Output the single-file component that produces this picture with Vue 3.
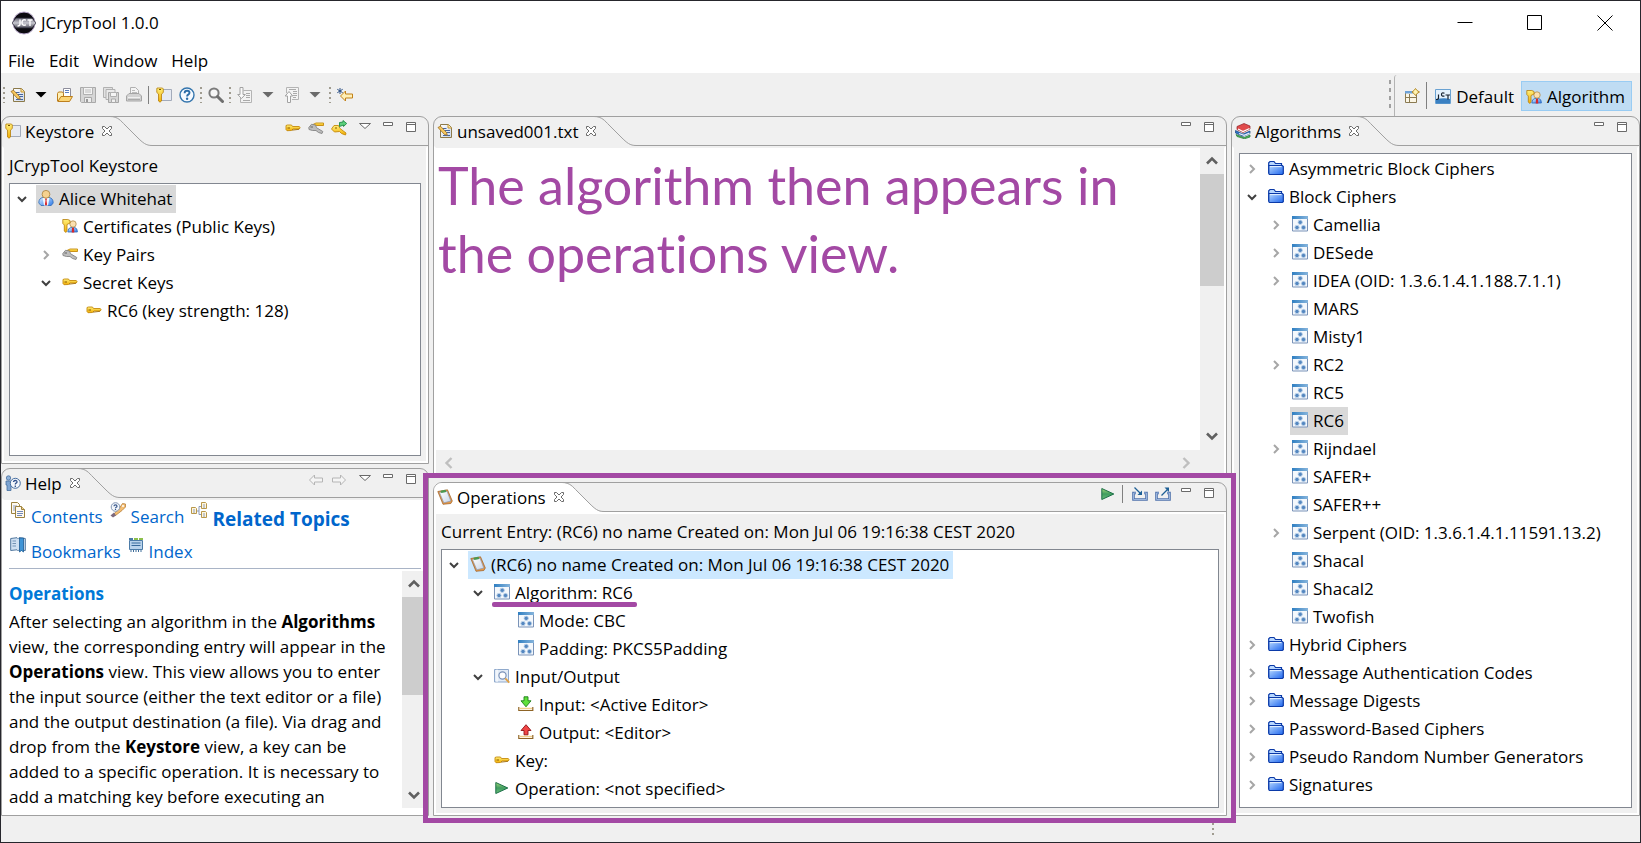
<script setup>
import { ref } from 'vue'

const editorText = ref('The algorithm then appears in\nthe operations view.')

const menus = ['File', 'Edit', 'Window', 'Help']

const tools = [
  { kind: 'grip' },
  { kind: 'icon', icon: 'new', label: 'New' },
  { kind: 'drop', icon: 'drop-black', label: 'New options' },
  { kind: 'icon', icon: 'open', label: 'Open' },
  { kind: 'icon', icon: 'save', label: 'Save' },
  { kind: 'icon', icon: 'saveall', label: 'Save all' },
  { kind: 'icon', icon: 'print', label: 'Print' },
  { kind: 'sep' },
  { kind: 'icon', icon: 'keystore', label: 'Keystore' },
  { kind: 'icon', icon: 'help', label: 'Help' },
  { kind: 'grip' },
  { kind: 'icon', icon: 'search', label: 'Search' },
  { kind: 'grip' },
  { kind: 'icon', icon: 'next', label: 'Next annotation' },
  { kind: 'drop', icon: 'drop-grey', label: 'Next annotation options' },
  { kind: 'icon', icon: 'prev', label: 'Previous annotation' },
  { kind: 'drop', icon: 'drop-grey', label: 'Previous annotation options' },
  { kind: 'grip' },
  { kind: 'icon', icon: 'lastedit', label: 'Last edit location' },
]

const keystoreTree = [
  { level: 0, state: 'open', icon: 'person', text: 'Alice Whitehat', mark: 'grey' },
  { level: 1, icon: 'cert', text: 'Certificates (Public Keys)' },
  { level: 1, state: 'closed', icon: 'keypair', text: 'Key Pairs' },
  { level: 1, state: 'open', icon: 'key', text: 'Secret Keys' },
  { level: 2, icon: 'key', text: 'RC6 (key strength: 128)' },
]

const operationsTree = [
  { level: 0, state: 'open', icon: 'clipboard', text: '(RC6) no name Created on: Mon Jul 06 19:16:38 CEST 2020', mark: 'blue' },
  { level: 1, state: 'open', icon: 'algo', text: 'Algorithm: RC6', mark: 'underlined' },
  { level: 2, icon: 'algo', text: 'Mode: CBC' },
  { level: 2, icon: 'algo', text: 'Padding: PKCS5Padding' },
  { level: 1, state: 'open', icon: 'io', text: 'Input/Output' },
  { level: 2, icon: 'input', text: 'Input: <Active Editor>' },
  { level: 2, icon: 'output', text: 'Output: <Editor>' },
  { level: 1, icon: 'key', text: 'Key:' },
  { level: 1, icon: 'run', text: 'Operation: <not specified>' },
]

const folder = (text, state = 'closed') => ({ level: 0, state, icon: 'folder', text })
const cipher = (text, state, mark) => ({ level: 1, state, icon: 'algo', text, mark })

const algorithmsTree = [
  folder('Asymmetric Block Ciphers'),
  folder('Block Ciphers', 'open'),
  cipher('Camellia', 'closed'),
  cipher('DESede', 'closed'),
  cipher('IDEA (OID: 1.3.6.1.4.1.188.7.1.1)', 'closed'),
  cipher('MARS'),
  cipher('Misty1'),
  cipher('RC2', 'closed'),
  cipher('RC5'),
  cipher('RC6', undefined, 'grey'),
  cipher('Rijndael', 'closed'),
  cipher('SAFER+'),
  cipher('SAFER++'),
  cipher('Serpent (OID: 1.3.6.1.4.1.11591.13.2)', 'closed'),
  cipher('Shacal'),
  cipher('Shacal2'),
  cipher('Twofish'),
  folder('Hybrid Ciphers'),
  folder('Message Authentication Codes'),
  folder('Message Digests'),
  folder('Password-Based Ciphers'),
  folder('Pseudo Random Number Generators'),
  folder('Signatures'),
]

const views = {
  keystore: {
    title: 'Keystore', icon: 'keystore',
    actions: [['key', 'New key'], ['keypair', 'New key pair'], ['keyadd', 'Import key'], ['menu', 'View menu'], ['min', 'Minimize'], ['max', 'Maximize']],
  },
  help: {
    title: 'Help', icon: 'helpview',
    actions: [['back', 'Back'], ['forward', 'Forward'], ['menu', 'View menu'], ['min', 'Minimize'], ['max', 'Maximize']],
  },
  editor: { title: 'unsaved001.txt', icon: 'new', actions: [['min', 'Minimize'], ['max', 'Maximize']] },
  operations: {
    title: 'Operations', icon: 'clipboard',
    actions: [['run', 'Run'], ['sep', ''], ['import', 'Import'], ['export', 'Export'], ['min', 'Minimize'], ['max', 'Maximize']],
  },
  algorithms: { title: 'Algorithms', icon: 'books', actions: [['min', 'Minimize'], ['max', 'Maximize']] },
}

const columns = [
  { name: 'left', views: ['keystore', 'help'] },
  { name: 'centre', views: ['editor', 'operations'] },
  { name: 'right', views: ['algorithms'] },
]
const trees = { keystore: keystoreTree, operations: operationsTree, algorithms: algorithmsTree }
const captions = {
  keystore: 'JCrypTool Keystore',
  operations: 'Current Entry: (RC6) no name Created on: Mon Jul 06 19:16:38 CEST 2020',
}
</script>

<template>
  <div class="window">
    <svg class="defs" aria-hidden="true">
      <defs>
        <linearGradient id="gGold" x1="0" y1="0" x2="0" y2="1"><stop offset="0" stop-color="#fff07a" /><stop offset="1" stop-color="#f2ac00" /></linearGradient>
        <linearGradient id="gBlue" x1="0" y1="0" x2="1" y2="1"><stop offset="0" stop-color="#d5ebff" /><stop offset="1" stop-color="#2f7bea" /></linearGradient>
        <linearGradient id="gFolder" x1="0" y1="0" x2="1" y2="1"><stop offset="0" stop-color="#b8daff" /><stop offset="1" stop-color="#1f66ee" /></linearGradient>
        <linearGradient id="gBar" x1="0" y1="0" x2="1" y2="0"><stop offset="0" stop-color="#2f7fc2" /><stop offset="1" stop-color="#86b4dc" /></linearGradient>
        <linearGradient id="gPage" x1="0" y1="0" x2="1" y2="1"><stop offset="0" stop-color="#ffffff" /><stop offset="1" stop-color="#c9d6ea" /></linearGradient>
        <linearGradient id="gRun" x1="0" y1="0" x2="0" y2="1"><stop offset="0" stop-color="#a4d878" /><stop offset="0.5" stop-color="#3f9c60" /><stop offset="1" stop-color="#6cc07a" /></linearGradient>
        <linearGradient id="gChrome" x1="0" y1="0" x2="0" y2="1"><stop offset="0" stop-color="#6a6a78" /><stop offset="0.5" stop-color="#c8c8d0" /><stop offset="1" stop-color="#4b4b58" /></linearGradient>
      </defs>
      <symbol id="logo" viewBox="0 0 24 24">
        <circle cx="12" cy="12" r="11" fill="#0c0b10" stroke="#b9a9cc" />
        <path d="M0 12 4 7h16l4 5-4 5H4Z" fill="url(#gChrome)" stroke="#2a2a35" stroke-width=".7" />
        <path d="M8 8.500v4.500q0 2-2.500 2M14 9.200q-4-1.400-4 2.300t4 2.300M15.500 9h5M18 9v6" stroke="#fff" stroke-width="1.400" fill="none" />
      </symbol>
      <symbol id="new" viewBox="0 0 16 16">
        <path d="M3.500 1.500h8l3 3v10h-11Z" fill="url(#gPage)" stroke="#8c7a4a" />
        <path d="M11 1.500v3.500h3.500" fill="#ffe9a8" stroke="#c9962f" />
        <path d="M5.500 5.500h4M8 7.500h5M9 9.500h4M6 12.500h7" stroke="#47679f" />
        <path d="M1 4.500 3.500 3.200 9.500 9.500l.8 2.700L7.500 11.500Z" fill="#f5c860" stroke="#9a6b1c" stroke-width=".8" />
      </symbol>
      <symbol id="open" viewBox="0 0 16 16">
        <path d="M6.500 1.500h7v8h-7Z" fill="#fff" stroke="#8e8e9c" />
        <path d="M8 3.500h4M8 5.500h4" stroke="#5d7fc0" />
        <path d="M.5 14V6.500l1-1.500h4l1 1.500v3h5" fill="#fff0b5" stroke="#bd7f1d" />
        <path d="M.8 14.500 4 9.500h11.500l-3 5Z" fill="#fbd575" stroke="#bd7f1d" />
      </symbol>
      <symbol id="save" viewBox="0 0 16 16">
        <path d="M.5.5h15v15h-14l-1-1Z" fill="#d6d6d6" stroke="#a9a9a9" />
        <path d="M3.500.5h9v7h-9Z" fill="#f4f4f4" stroke="#b0b0b0" /><path d="M5 3h6M5 5h6" stroke="#bcbcbc" />
        <path d="M4.500 10.500h7v5h-7Z" fill="#eee" stroke="#a9a9a9" /><path d="M6 12h2v3H6Z" fill="#999" />
      </symbol>
      <symbol id="saveall" viewBox="0 0 16 16">
        <path d="M.5.5h9v10h-9Z" fill="#e2e2e2" stroke="#b1b1b1" />
        <path d="M3 2.500h9v10H3Z" fill="#eaeaea" stroke="#b1b1b1" />
        <path d="M5.500 5.500h10v10h-10Z" fill="#d6d6d6" stroke="#a5a5a5" />
        <path d="M7.500 5.500h6v4h-6Z" fill="#f5f5f5" stroke="#b0b0b0" /><path d="M8.500 12h4v3.500h-4Z" fill="#f0f0f0" stroke="#aaa" />
      </symbol>
      <symbol id="print" viewBox="0 0 16 16">
        <path d="M4.500.5h5l3 3v5h-8Z" fill="#f4f4f4" stroke="#b0b0b0" /><path d="M6 3.500h3M6 5.500h5" stroke="#bbb" />
        <path d="M.5 9 3 6.500h10L15.500 9v5h-15Z" fill="#d2d2d2" stroke="#a5a5a5" /><path d="M2 10.500h12" stroke="#efefef" /><path d="M2 12.500h12" stroke="#aaa" />
      </symbol>
      <symbol id="keystore" viewBox="0 0 16 16">
        <path d="M4.500 2.500h11v11h-11Z" fill="#e6eaf2" stroke="#a3abba" />
        <path d="M1 1h5.500l.8 1v3.500L5.500 7v7L4 15.200 2.500 14V7L.8 5.500V2Z" fill="url(#gGold)" stroke="#b57d0a" stroke-width=".8" />
        <path d="M3 2.500h2" stroke="#7c5400" />
      </symbol>
      <symbol id="help" viewBox="0 0 16 16">
        <circle cx="8" cy="8" r="7" fill="#f6faff" stroke="#3475ad" stroke-width="1.400" />
        <path d="M5.600 6.200q0-2.400 2.500-2.400 2.400 0 2.400 2 0 1.200-1.300 1.900-1.100.6-1.100 1.700" fill="none" stroke="#2d6da8" stroke-width="1.900" /><circle cx="8.100" cy="11.700" r="1.200" fill="#2d6da8" />
      </symbol>
      <symbol id="search" viewBox="0 0 16 16">
        <circle cx="6" cy="6" r="4.600" fill="#f6f6f6" stroke="#7c7c7c" stroke-width="2" />
        <path d="m9.500 9.500 5 5" stroke="#6f6f6f" stroke-width="3" stroke-linecap="round" />
      </symbol>
      <symbol id="next" viewBox="0 0 16 16">
        <path d="M6.500 3.500h8v12h-11V11" fill="#f3f3f3" stroke="#b4b4b4" /><path d="M9 6.500h4M9 8.500h4M9 10.500h4M6 13.500h7" stroke="#aaa" />
        <path d="M3 .5h3v7h2.300L4.500 11.500.7 7.500H3Z" fill="#fafafa" stroke="#a2a2a2" />
      </symbol>
      <symbol id="prev" viewBox="0 0 16 16">
        <path d="M2.500 6V.5h12v12H8" fill="#f3f3f3" stroke="#b4b4b4" /><path d="M5 2.500h7M9 4.500h4M9 6.500h4M9 8.500h4M9 10.500h3" stroke="#aaa" />
        <path d="M3.500 15.500h3V9h2.200L5 4.500 1.200 9h2.300Z" fill="#fafafa" stroke="#a2a2a2" />
      </symbol>
      <symbol id="lastedit" viewBox="0 0 16 16">
        <path d="M3 1v6M.3 2.300l5.400 3.400M5.700 2.300.3 5.700" stroke="#2b4f84" />
        <path d="M3.500 9 8.500 4v3H15.500v4H8.500v3Z" fill="#fff0b8" stroke="#c28118" />
      </symbol>
      <symbol id="drop-black" viewBox="0 0 16 16"><path d="M2.500 5h11L8 10.500Z" fill="#000" /></symbol>
      <symbol id="drop-grey" viewBox="0 0 16 16"><path d="M2.500 5h11L8 10.500Z" fill="#6a6a6a" /></symbol>
      <symbol id="perspective" viewBox="0 0 16 16">
        <path d="M1.500 3.500h11v11h-11Z" fill="#fbf6e6" stroke="#8a7a52" /><path d="M1 3h8v2.500H1Z" fill="#6ea2d8" /><path d="M5.500 6v8M1.500 9.500h11" stroke="#8a7a52" />
        <path d="M11.500.5 13 2.500 15.500 4 13 5.500 11.500 7.500 10 5.500 8 4 10 2.500Z" fill="#fff3b0" stroke="#b48a28" />
      </symbol>
      <symbol id="jct" viewBox="0 0 16 16">
        <path d="M.5.5h15v14H.5Z" fill="#e4f1fc" stroke="#6aa2d2" /><path d="M1 10.500q7-2 14-.5v4.500H1Z" fill="#3a80c2" />
        <path d="M3.500 5.500v3.500q0 1.500-2.500 1.500M9.500 4.200q-3-1-3 1.300t3 1.500M10.500 6h4.500M13 6v4.500" fill="none" stroke="#16202e" stroke-width="1.200" />
      </symbol>
      <symbol id="key" viewBox="0 0 16 16">
        <path d="M1 5.500 2.500 5H6.500l1 1.500H14l1.200 1-1 1.500H8L6.500 10.500 2 10.700 1 9.500Z" fill="url(#gGold)" stroke="#c58a0c" stroke-width=".9" /><path d="M2.500 8h2.500" stroke="#8a5a00" /><path d="M7 10.200 14 9.300" stroke="#9a6500" stroke-width=".8" />
      </symbol>
      <symbol id="keypair" viewBox="0 0 16 16">
        <path d="M5 4.500 8 3h7.500v2.500H9Z" fill="url(#gGold)" stroke="#c58a0c" stroke-width=".9" />
        <path d="M.8 7.500 3.500 4.300 7.500 5l1 2.700L14.800 11.500 14 13.500 10.500 12.500 8 10.500 4.500 10.500 1 9.500Z" fill="#bdbdbd" stroke="#858585" stroke-width=".9" /><path d="M2.500 7h2.500" stroke="#666" />
      </symbol>
      <symbol id="keyadd" viewBox="0 0 16 16">
        <path d="M.5 9 3 5.500 7.500 5.500 9 8.500 15 13 14.500 15 10.500 13.500 8.500 11.500 3.500 12Z" fill="url(#gGold)" stroke="#c58a0c" stroke-width=".9" /><path d="M4 8h2" stroke="#8a5a00" />
        <path d="M8.500 2.500 12 2V.5l3.700 3L12.500 6.500V5L8.500 6.500Z" fill="#5ccf7c" stroke="#1f8a46" stroke-width=".9" />
      </symbol>
      <symbol id="menu" viewBox="0 0 16 16"><path d="M2.500 3.500h11L8 8.500Z" fill="#fff" stroke="#6a6a6a" /></symbol>
      <symbol id="min" viewBox="0 0 16 16"><path d="M3.500 2.500h9v3h-9Z" fill="#fff" stroke="#6a6a6a" /></symbol>
      <symbol id="max" viewBox="0 0 16 16"><path d="M3.500 2.500h9v9h-9ZM3.500 4.500h9" fill="#fff" stroke="#6a6a6a" /></symbol>
      <symbol id="back" viewBox="0 0 16 16"><path d="M1.500 8 6.500 3v3H14.500v4H6.500v3Z" fill="#f5f5f5" stroke="#b5b5b5" /></symbol>
      <symbol id="forward" viewBox="0 0 16 16"><path d="M14.500 8 9.500 3v3H1.500v4H9.500v3Z" fill="#f5f5f5" stroke="#b5b5b5" /></symbol>
      <symbol id="close" viewBox="0 0 12 12"><path d="M1.500 1.500h2L6 4 8.500 1.500h2v2L8 6l2.500 2.500v2h-2L6 8l-2.500 2.500h-2v-2L4 6 1.500 3.500Z" fill="#fff" stroke="#6a6a6a" /></symbol>
      <symbol id="helpview" viewBox="0 0 16 16">
        <circle cx="3.500" cy="3" r="2.200" fill="#8fb2da" stroke="#456da0" stroke-width=".8" /><path d="M1 6h5v9.500H2V10H1Z" fill="#7ea5d3" stroke="#456da0" stroke-width=".8" />
        <circle cx="10.300" cy="8.300" r="5" fill="#f4f7fc" stroke="#456da0" /><path d="M8.500 7q0-1.500 1.800-1.500T12 7q0 .8-.9 1.200-.8.400-.8 1.200M10.300 10.500V12" fill="none" stroke="#30508c" stroke-width="1.300" />
      </symbol>
      <symbol id="person" viewBox="0 0 16 16">
        <path d="M.8 13q0-5 4.200-5.500h6q4.200.5 4.200 5.500l-2 2.500H3Z" fill="url(#gBlue)" stroke="#2b68b8" stroke-width=".8" />
        <path d="M4.500 8h7L10 15.500H6Z" fill="#eef6ff" /><path d="M7 8.500h2l-.5 2 .6 4L8 15.800 6.900 14.500 7.500 10.500Z" fill="#d8262a" />
        <circle cx="8" cy="4.300" r="3.900" fill="#f6d290" stroke="#a9803c" stroke-width=".8" />
      </symbol>
      <symbol id="cert" viewBox="0 0 16 16">
        <path d="M5.800 14q0-4 3-4.500h4q2.600.5 2.600 4.500Z" fill="url(#gBlue)" stroke="#2b68b8" stroke-width=".8" /><path d="M10 9.500h2l.3 5H9.700Z" fill="#d8262a" />
        <circle cx="11" cy="6" r="3.200" fill="#fae0b0" stroke="#b08a4c" stroke-width=".8" />
        <path d="M.8 1.500h5l2.200 1V5L5 6.500v6L3.800 14.500 2.300 13V7L.8 5.500Z" fill="url(#gGold)" stroke="#b57d0a" stroke-width=".8" />
      </symbol>
      <symbol id="books" viewBox="0 0 16 16">
        <path d="M1 11.500 9 14.500l6-2.500v2l-5.500 1.800L2 13.500Z" fill="#4dbb5a" stroke="#23743a" stroke-width=".7" />
        <path d="M.5 7.500 8 11l7-3v2.500L8 13.300.5 10Z" fill="#2f74c8" stroke="#17457f" stroke-width=".7" /><path d="M4 10.500 9 12.300l5.500-2.200" stroke="#e8eefc" stroke-width="1.200" fill="none" />
        <path d="M2 3.500 9 .5l6 2.500v3L8 9.500 2 6.500Z" fill="#e04b4b" stroke="#8e1f25" stroke-width=".7" /><path d="m3 6 5 2.500 6.500-3" stroke="#fff" stroke-width="1.200" fill="none" />
      </symbol>
      <symbol id="clipboard" viewBox="0 0 16 16">
        <path d="M.8 2.500 10.500.8 15.300 12 13.800 14.500 6 15.300Z" fill="#e59a48" stroke="#9c5a20" stroke-width=".7" />
        <path d="M2.500 3.500 10 2.300 13.800 12 6.800 13.800Z" fill="url(#gPage)" stroke="#7d93b8" stroke-width=".6" />
        <path d="m3.500 1.800 5-1 .8 2.200-5 1Z" fill="#4a9a50" />
      </symbol>
      <symbol id="folder" viewBox="0 0 16 16">
        <path d="M.7 13V2.700L2 1.500h4l1.500 2h6V6" fill="#b9d8ff" stroke="#0b3aa8" stroke-width="1.200" />
        <path d="M.8 13.800V5.500h13.500l1 1v7.300l-1 .7H1.500Z" fill="url(#gFolder)" stroke="#0b3aa8" stroke-width="1.200" /><path d="M2 6.600h11.500" stroke="#e6f2ff" />
      </symbol>
      <symbol id="algo" viewBox="0 0 16 16">
        <path d="M.5.5h15v14.500H.5Z" fill="#f4f8fc" stroke="#7a93b8" /><path d="M0 0h16v3H0Z" fill="url(#gBar)" />
        <g fill="#5487c0" stroke="#c3d7ec" stroke-width=".9"><circle cx="8.200" cy="6.300" r="2.200" /><circle cx="5" cy="11.500" r="2.200" /><circle cx="11.500" cy="11.500" r="2.200" /></g>
      </symbol>
      <symbol id="io" viewBox="0 0 16 16">
        <path d="M.5 1.500h14v12.500H.5Z" fill="#e3ecf7" stroke="#8fa9cc" /><path d="M3 1.500v12.500" stroke="#fff" /><circle cx="8.500" cy="7.500" r="3.600" fill="#fff" stroke="#7b92b8" stroke-width="1.200" /><path d="m11.300 10.300 4 4.400" stroke="#e0a044" stroke-width="1.800" />
      </symbol>
      <symbol id="input" viewBox="0 0 16 16">
        <path d="M.8 11v3.500h14V11" fill="none" stroke="#8e6426" stroke-width="1.200" /><path d="M1.500 12.500h12.500" stroke="#f0cf8a" stroke-width="1.500" />
        <path d="M6 .8h4v4h3L8 10.800 3 4.800h3Z" fill="#5fe03a" stroke="#1d7d18" stroke-width=".9" />
      </symbol>
      <symbol id="output" viewBox="0 0 16 16">
        <path d="M.8 11v3.500h14V11" fill="none" stroke="#8e6426" stroke-width="1.200" /><path d="M1.500 12.500h12.500" stroke="#f0cf8a" stroke-width="1.500" />
        <path d="M6 10.800h4V6.500h3L8 .7 3 6.500h3Z" fill="#f04545" stroke="#8d1216" stroke-width=".9" />
      </symbol>
      <symbol id="run" viewBox="0 0 16 16"><path d="M1.800 2.500 13.800 8 1.800 13.500Z" fill="url(#gRun)" stroke="#1c7048" /></symbol>
      <symbol id="import" viewBox="0 0 16 16">
        <path d="M4 7H1.500v6.500h13V7H12" fill="none" stroke="#4f72ac" stroke-width="2.600" /><path d="M4 7H1.500v6.500h13V7H12" fill="none" stroke="#9ab4dc" stroke-width="1" />
        <path d="m2.500 1.500 6 6" stroke="#1d5f96" stroke-width="1.200" /><path d="M10 4.500V9H5.500Z" fill="#1d5f96" />
      </symbol>
      <symbol id="export" viewBox="0 0 16 16">
        <path d="M4 7H1.500v6.500h13V7H12" fill="none" stroke="#4f72ac" stroke-width="2.600" /><path d="M4 7H1.500v6.500h13V7H12" fill="none" stroke="#9ab4dc" stroke-width="1" />
        <path d="m6.500 9.500 6-6" stroke="#1d5f96" stroke-width="1.200" /><path d="M9.500 1.500H14V6Z" fill="#1d5f96" />
      </symbol>
      <symbol id="contents" viewBox="0 0 16 16">
        <path d="M1.500.5h6l2 2v9h-8Z" fill="#fffaf0" stroke="#9c8240" /><path d="M3 4h4M3 6h4M3 8h3" stroke="#8c9cc0" />
        <path d="M5.500 4.500h6l3 3v8h-9Z" fill="#fffaf0" stroke="#9c8240" /><path d="M11.500 4.500v3h3" fill="#f1d58e" stroke="#9c8240" /><path d="M7 9.500h6M7 11.500h6M7 13.500h5" stroke="#7188b8" />
      </symbol>
      <symbol id="helpsearch" viewBox="0 0 16 16">
        <path d="M3 13 9.500 6 12.500 1.500l3 .5v3L12 8.500l-6.500 5Z" fill="#f4bd70" stroke="#b8803c" stroke-width=".8" /><path d="m.5 13.500 3.500-3 2 3-3 2Z" fill="#7d6a7e" /><circle cx="13" cy="4" r="1" fill="#fff" />
        <circle cx="5.500" cy="5" r="4.300" fill="#f4f7fb" stroke="#8296b4" /><path d="M4 4.200q0-1.400 1.500-1.400T7 4.200q0 .8-.8 1.100t-.7 1.100M5.500 7v1" fill="none" stroke="#38588c" stroke-width="1.200" />
      </symbol>
      <symbol id="related" viewBox="0 0 16 16">
        <path d="M5 9h3V4.500h2.500M8 9v3.500h2.500" fill="none" stroke="#8a9abb" />
        <g fill="#fff6dc" stroke="#b8974a"><path d="M.5 5.500h4l1 1v5h-5ZM10.500.5h4l1 1v5h-5ZM10.500 9.500h4l1 1v5h-5Z" /></g><path d="M2 8h2M2 10h2M12 3h2M12 5h2M12 12h2M12 14h2" stroke="#8a9abb" />
      </symbol>
      <symbol id="bookmarks" viewBox="0 0 16 16">
        <path d="M.7 1.500 7 .7l1 1 1-1 6.300.8v12L9 12.800l-1 1-1-1-6.300.7Z" fill="#cfe0f2" stroke="#51779e" /><path d="M2.500 4h3.500M2.500 6.500h3.500M2.500 9h3.500" stroke="#7393b5" />
        <path d="M9.500 1h4v14l-2-1.500-2 1.500Z" fill="#3e94d6" stroke="#1d5c94" stroke-width=".8" />
      </symbol>
      <symbol id="index" viewBox="0 0 16 16">
        <path d="M1.500 3.500h13v9h-13Z" fill="#b9d3ec" stroke="#4b7ba8" /><path d="M6 1h4v2H6ZM11 1h4v2h-4Z" fill="#8cbf4c" /><path d="M1 1h4v2H1Z" fill="#4b7ba8" /><path d="M3.500 6h9M3.500 8.500h9" stroke="#376a9c" /><path d="M3 13v2M5.500 13v2M8 13v2M10.500 13v2M13 13v2" stroke="#3d6c99" />
      </symbol>
      <symbol id="twist-open" viewBox="0 0 16 16"><path d="M4 6l4 4 4-4" fill="none" stroke="#404040" stroke-width="2" /></symbol>
      <symbol id="twist-closed" viewBox="0 0 16 16"><path d="M6 4l4 4-4 4" fill="none" stroke="#a6a6a6" stroke-width="2" /></symbol>
      <symbol id="arrow-up" viewBox="0 0 16 16"><path d="M3 10.500 8 5.500l5 5" fill="none" stroke="#606060" stroke-width="2.600" /></symbol>
      <symbol id="arrow-down" viewBox="0 0 16 16"><path d="M3 5.500l5 5 5-5" fill="none" stroke="#606060" stroke-width="2.600" /></symbol>
      <symbol id="arrow-left" viewBox="0 0 16 16"><path d="M10.500 3l-5 5 5 5" fill="none" stroke="#bfbfbf" stroke-width="2.400" /></symbol>
      <symbol id="arrow-right" viewBox="0 0 16 16"><path d="M5.500 3l5 5-5 5" fill="none" stroke="#bfbfbf" stroke-width="2.400" /></symbol>
    </svg>

    <header class="titlebar">
      <svg class="logo"><use href="#logo" /></svg>
      <h1>JCrypTool 1.0.0</h1>
      <div class="controls">
        <button aria-label="Minimize window"><svg viewBox="0 0 16 16"><path d="M.5 7.500h15" /></svg></button>
        <button aria-label="Maximize window"><svg viewBox="0 0 16 16"><path d="M.5.5h14v14H.5Z" /></svg></button>
        <button aria-label="Close window"><svg viewBox="0 0 16 16"><path d="m.5.5 15 15m0-15-15 15" /></svg></button>
      </div>
    </header>

    <nav class="menubar">
      <button v-for="m in menus" :key="m">{{ m }}</button>
    </nav>

    <div class="toolbar">
      <template v-for="(t, i) in tools" :key="i">
        <span v-if="t.kind === 'grip'" class="grip"></span>
        <span v-else-if="t.kind === 'sep'" class="sep"></span>
        <button v-else class="tool" :class="t.kind" :aria-label="t.label"><svg class="icon"><use :href="'#' + t.icon" /></svg></button>
      </template>
      <div class="perspectives">
        <span class="grip tall"></span>
        <div class="switcher">
          <button class="tool" aria-label="Open perspective"><svg class="icon"><use href="#perspective" /></svg></button>
          <span class="sep"></span>
          <button class="persp"><svg class="icon"><use href="#jct" /></svg>Default</button>
          <button class="persp active"><svg class="icon"><use href="#cert" /></svg>Algorithm</button>
        </div>
      </div>
    </div>

    <main class="workbench">
      <div v-for="c in columns" :key="c.name" class="column" :class="c.name">
        <section v-for="v in c.views" :key="v" class="view" :class="v" :aria-label="views[v].title">
          <header class="tabstrip">
            <div class="tab">
              <svg class="icon"><use :href="'#' + views[v].icon" /></svg>
              <h2>{{ views[v].title }}</h2>
              <button class="close" aria-label="Close view"><svg><use href="#close" /></svg></button>
            </div>
            <svg class="curve" viewBox="0 0 42 30"><path class="fill" d="M0 0C8 0 11 4 15 8L27 20C33 26 36 29.500 42 29.500V30H0Z" /><path class="line" d="M0 -.5C8 -.5 11 4 15 8L27 20C33 26 36 28.500 42 28.500" /></svg>
            <div class="actions">
              <template v-for="[icon, label] in views[v].actions" :key="icon">
                <span v-if="icon === 'sep'" class="sep"></span>
                <button v-else class="tool" :class="icon" :aria-label="label"><svg class="icon"><use :href="'#' + icon" /></svg></button>
              </template>
            </div>
          </header>

          <div class="body">
            <p v-if="captions[v]" class="caption">{{ captions[v] }}</p>

            <ul v-if="trees[v]" class="tree">
              <li v-for="row in trees[v]" :key="row.text" class="row" :class="'level-' + row.level">
                <button v-if="row.state" class="twist" :aria-label="'Toggle ' + row.text"><svg class="icon"><use :href="'#twist-' + row.state" /></svg></button>
                <span v-else class="twist"></span>
                <span class="label" :class="row.mark"><svg class="icon"><use :href="'#' + row.icon" /></svg>{{ row.text }}</span>
              </li>
            </ul>

            <div v-if="v === 'editor'" class="editpane">
              <textarea v-model="editorText" aria-label="unsaved001.txt" spellcheck="false"></textarea>
              <div class="vscroll editor-scroll">
                <button aria-label="Scroll up"><svg class="icon"><use href="#arrow-up" /></svg></button>
                <div class="track"><span class="thumb"></span></div>
                <button aria-label="Scroll down"><svg class="icon"><use href="#arrow-down" /></svg></button>
              </div>
              <div class="hscroll">
                <button aria-label="Scroll left"><svg class="icon"><use href="#arrow-left" /></svg></button>
                <button aria-label="Scroll right"><svg class="icon"><use href="#arrow-right" /></svg></button>
              </div>
            </div>

            <template v-if="v === 'help'">
              <nav class="helplinks">
                <div class="linkrow">
                  <a href="#"><svg class="icon"><use href="#contents" /></svg>Contents</a>
                  <a href="#"><svg class="icon"><use href="#helpsearch" /></svg>Search</a>
                  <a href="#" class="current"><svg class="icon"><use href="#related" /></svg>Related Topics</a>
                </div>
                <div class="linkrow">
                  <a href="#"><svg class="icon"><use href="#bookmarks" /></svg>Bookmarks</a>
                  <a href="#"><svg class="icon"><use href="#index" /></svg>Index</a>
                </div>
              </nav>
              <div class="helppane">
                <article>
                  <h3>Operations</h3>
                  <p>
                    After selecting an algorithm in the <b>Algorithms</b><br>
                    view, the corresponding entry will appear in the<br>
                    <b>Operations</b> view. This view allows you to enter<br>
                    the input source (either the text editor or a file)<br>
                    and the output destination (a file). Via drag and<br>
                    drop from the <b>Keystore</b> view, a key can be<br>
                    added to a specific operation. It is necessary to<br>
                    add a matching key before executing an
                  </p>
                </article>
                <div class="vscroll help-scroll">
                  <button aria-label="Scroll up"><svg class="icon"><use href="#arrow-up" /></svg></button>
                  <div class="track"><span class="thumb"></span></div>
                  <button aria-label="Scroll down"><svg class="icon"><use href="#arrow-down" /></svg></button>
                </div>
              </div>
            </template>
          </div>
        </section>
      </div>
    </main>

    <footer class="statusbar"><span class="grip"></span></footer>
  </div>
</template>

<style>
body { background: #fff; }
</style>

<style scoped>
* { box-sizing: border-box; }
.window {
  display: flex;
  flex-direction: column;
  height: 100vh;
  border: 1px solid #26262c;
  background: #f0f0f0;
  color: #000;
  font-family: "Open Sans", "Noto Sans", sans-serif;
  font-size: 17px;
  line-height: 28px;
  overflow: hidden;
}
.defs { position: absolute; width: 0; height: 0; }
button { margin: 0; padding: 0; border: 0; background: none; color: inherit; font: inherit; }
h1, h2, h3, p, ul { margin: 0; padding: 0; font-size: inherit; font-weight: 400; list-style: none; }
.icon { display: block; flex: none; width: 16px; height: 16px; }

.titlebar { display: flex; align-items: center; flex: none; height: 44px; padding-left: 11px; gap: 5px; background: #fff; }
.logo { width: 24px; height: 24px; }
.controls { display: flex; align-self: stretch; margin-left: auto; }
.controls button { display: flex; align-items: center; justify-content: center; width: 70px; }
.controls svg { width: 16px; height: 16px; fill: none; stroke: #000; }

.menubar { display: flex; flex: none; height: 28px; padding-left: 7px; gap: 14px; background: #fff; line-height: 32px; }

.toolbar { display: flex; align-items: center; flex: none; height: 43px; }
.tool { display: flex; align-items: center; justify-content: center; flex: none; width: 23px; height: 24px; }
.tool.drop { width: 24px; }
.grip { flex: none; width: 6px; height: 16px; background: repeating-linear-gradient(#a09c90 0 2px, transparent 2px 5px) center / 2px 100% no-repeat; }
.grip:first-child { width: 5px; }
.grip.tall { height: 30px; align-self: center; background: repeating-linear-gradient(#a0a0a0 0 4px, transparent 4px 8px) center / 2px 100% no-repeat; }
.sep { flex: none; width: 7px; height: 18px; background: linear-gradient(#808080, #808080) center / 1px 100% no-repeat; }
.perspectives { display: flex; align-self: stretch; margin-left: auto; padding-right: 8px; gap: 2px; }
.switcher { display: flex; align-items: center; margin-top: 2px; padding-left: 5px; border-left: 1px solid #b4b4b4; border-top-left-radius: 3px; }
.switcher .sep { height: 27px; }
.persp { display: flex; align-items: center; height: 30px; padding: 2px 6px 0 4px; gap: 5px; border: 1px solid transparent; }
.persp.active { background: #bfdcf3; border-color: #99ccf3; }

.workbench { display: grid; flex: 1; grid-template-columns: 428fr 794fr 409fr; gap: 4px; min-height: 0; }
.column { display: grid; gap: 4px; min-width: 0; min-height: 0; grid-template-columns: minmax(0, 1fr); }
.left { grid-template-rows: minmax(0, 1fr) minmax(0, 1fr); }
.centre { grid-template-rows: minmax(0, 362fr) minmax(0, 334fr); }
.right { grid-template-rows: minmax(0, 1fr); }

.view { position: relative; display: flex; flex-direction: column; border: 1px solid #a0a0a0; border-radius: 9px 9px 0 0; }
.tabstrip { display: flex; flex: none; height: 29px; }
.tab { display: flex; align-items: center; gap: 4px; padding: 1px 0 0 3px; border-radius: 8px 0 0 0; }
.tab h2 { white-space: nowrap; }
.tab > .icon { margin-bottom: 2px; }
.close { position: relative; z-index: 1; width: 12px; height: 12px; margin: 0 0 2px 3px; }
.close svg { display: block; width: 12px; height: 12px; }
.curve { flex: none; width: 42px; height: 30px; margin-left: -3px; overflow: visible; }
.curve .fill { fill: none; }
.curve .line { fill: none; stroke: #a0a0a0; }
.actions { display: flex; flex: 1; align-items: flex-start; justify-content: flex-end; padding-right: 6px; border-bottom: 1px solid #a0a0a0; }
.actions .tool { height: 22px; }
.actions .menu { margin-left: 3px; }
.actions .sep { width: 6px; margin: 2px 3px 0 0; }
.body { display: flex; flex: 1; flex-direction: column; min-height: 0; padding: 0 5px 5px; border: 2px solid #fff; border-top-color: #f0f0f0; }
.caption { flex: none; height: 35px; line-height: 36px; white-space: nowrap; }
.tree { flex: 1; min-height: 0; padding-top: 1px; border: 1px solid #828790; background: #fff; overflow: hidden; }
.algorithms .body { padding-top: 5px; }

.row { display: flex; height: 28px; }
.level-1 { padding-left: 24px; }
.level-2 { padding-left: 48px; }
.twist { display: flex; align-items: center; justify-content: center; flex: none; width: 24px; margin-right: 2px; }
.label { position: relative; display: flex; align-items: center; gap: 5px; padding: 0 4px 0 2px; white-space: nowrap; }
.label .icon { margin-bottom: 2px; }
.label.grey { background: #d9d9d9; }
.label.blue { background: #cce8ff; }
.label.underlined::after { content: ""; position: absolute; left: 0; right: 0; bottom: 0; height: 5px; border-radius: 2px; background: #a349a4; }

.operations .tab { background: #fff; }
.operations .curve .fill { fill: #fff; }
.operations .body { border-top-color: #fff; }
.operations::after { content: ""; position: absolute; z-index: 2; inset: -10px -10px -8px -11px; border: 5px solid #a349a4; pointer-events: none; }

.editor .body { padding: 0; }
.editpane { display: grid; flex: 1; grid-template: minmax(0, 1fr) 25px / minmax(0, 1fr) 24px; }
textarea { display: block; padding: 3px 2px; border: 0; outline: 0; resize: none; overflow: hidden; background: #fff; color: #a349a4; font: 52px/68px Lato, "Open Sans", sans-serif; font-variant-ligatures: none; }
.vscroll { display: flex; flex-direction: column; flex: none; width: 24px; background: #f0f0f0; }
.vscroll button { display: flex; align-items: center; justify-content: center; flex: none; height: 26px; }
.track { display: flex; flex: 1; flex-direction: column; min-height: 0; }
.thumb { background: #cdcdcd; }
.editor-scroll { padding-bottom: 1px; }
.editor-scroll .thumb { height: 45%; }
.help-scroll .thumb { height: 53%; }
.hscroll { grid-column: 1; display: flex; align-items: center; justify-content: space-between; padding: 0 6px 0 5px; background: #f0f0f0; }

.help .body { padding-right: 0; background: #fff; }
.helplinks { flex: none; height: 69px; margin-right: 5px; border-bottom: 1px solid #a9b4c6; }
.linkrow { display: flex; height: 35px; padding: 2px 0 0 1px; gap: 7px; }
.linkrow a { display: flex; gap: 5px; line-height: 30px; color: #0066cc; text-decoration: none; white-space: nowrap; }
.linkrow .current { font-size: 19px; font-weight: 700; line-height: 34px; }
.helppane { display: flex; flex: 1; min-height: 0; margin-top: 2px; }
article { flex: 1; min-width: 0; padding-top: 10px; overflow: hidden; line-height: 25px; white-space: nowrap; }
article h3 { margin-bottom: 3px; color: #0078d7; font-weight: 700; }

.statusbar { display: flex; align-items: center; justify-content: flex-end; flex: none; height: 26px; padding-right: 425px; }
.statusbar .grip { height: 12px; }
</style>
